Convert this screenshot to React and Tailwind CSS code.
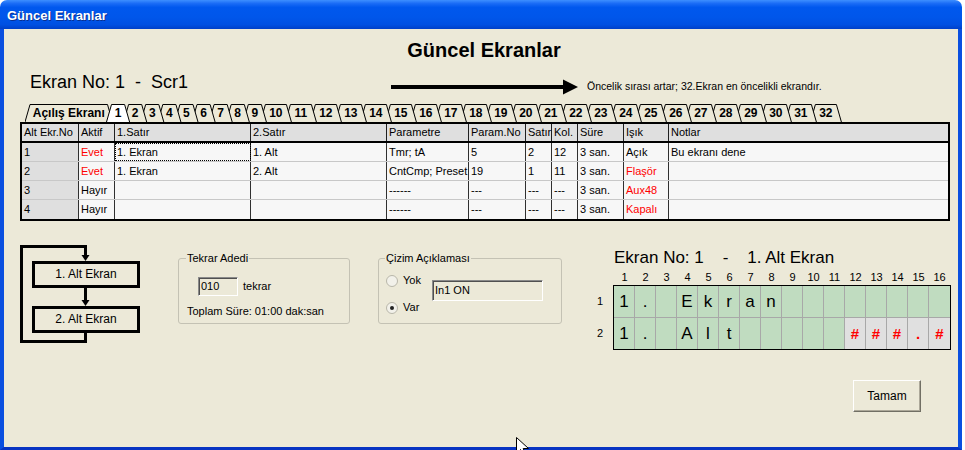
import React from 'react';

// column widths of the grid (px), incl. their own right border
const COLS = [
  { title: 'Alt Ekr.No', w: 57 },
  { title: 'Aktif', w: 36 },
  { title: '1.Satır', w: 136 },
  { title: '2.Satır', w: 136 },
  { title: 'Parametre', w: 82 },
  { title: 'Param.No', w: 57 },
  { title: 'Satır', w: 26 },
  { title: 'Kol.', w: 26 },
  { title: 'Süre', w: 46 },
  { title: 'Işık', w: 45 },
  { title: 'Notlar', w: 279 },
];

const ROWS = [
  ['1', 'Evet', '1. Ekran', '1. Alt', 'Tmr; tA', '5', '2', '12', '3 san.', 'Açık', 'Bu ekranı dene'],
  ['2', 'Evet', '1. Ekran', '2. Alt', 'CntCmp; Preset', '19', '1', '11', '3 san.', 'Flaşör', ''],
  ['3', 'Hayır', '', '', '------', '---', '---', '---', '3 san.', 'Aux48', ''],
  ['4', 'Hayır', '', '', '------', '---', '---', '---', '3 san.', 'Kapalı', ''],
];

const TABS = [{ label: 'Açılış Ekranı', w: 81.5 }];
for (let i = 1; i <= 32; i++) TABS.push({ label: String(i), w: i < 10 ? 17.1 : 25 });

const LCD = [
  ['1', '.', '', 'E', 'k', 'r', 'a', 'n', '', '', '', '', '', '', '', ''],
  ['1', '.', '', 'A', 'l', 't', '', '', '', '', '', '#', '#', '#', '.', '#'],
];

function TitleBar() {
  return (
    <div className="flex h-[29px] items-center rounded-t-[7px] bg-[linear-gradient(180deg,#3D8FFF_0%,#1A6CF6_12%,#0058EE_25%,#0056EA_60%,#0050E2_85%,#0040C8_100%)] pl-[7px] pt-[1px]">
      <span className="text-[13px] font-bold leading-[15px] text-white [text-shadow:1px_1px_0_#0A2F8F]">Güncel Ekranlar</span>
    </div>
  );
}

function TabStrip() {
  const H = 18;
  let x = 3;
  const shapes = TABS.map((t, i) => {
    const L = x;
    x += t.w;
    return { L, R: x, i };
  });
  const total = x + 4;
  const pts = (s) => `${s.L - 3},${H} ${s.L + 2},0.5 ${s.R - 2},0.5 ${s.R + 3},${H}`;
  const back = [...shapes].reverse().filter((s) => s.i !== 1);
  const sel = shapes[1];
  return (
    <div className="relative ml-[21px] mt-[1px] h-[18px]" style={{ width: total }}>
      <svg className="absolute inset-0" width={total} height={H}>
        {back.map((s) => (
          <g key={s.i}>
            <polygon points={pts(s)} fill="#ECE9D8" />
            <polyline points={pts(s)} fill="none" stroke="#000" strokeWidth="1" />
          </g>
        ))}
        <polygon points={pts(sel)} fill="#fff" />
        <polyline points={pts(sel)} fill="none" stroke="#000" strokeWidth="1" />
      </svg>
      <div className="relative flex h-full pl-[3px]">
        {TABS.map((t, i) => (
          <div key={i} className="flex items-end justify-center pb-[2px] text-[12px] font-bold leading-[13px]" style={{ width: t.w }}>
            {t.label}
          </div>
        ))}
      </div>
    </div>
  );
}

function Grid() {
  const red = (c, v) => (c === 1 && v === 'Evet') || (c === 9 && v !== 'Açık');
  return (
    <div className="ml-[16px] w-[930px] border-2 border-black text-[11px] leading-[13px]">
      <div className="flex h-[19px] border-b-2 border-black bg-[#DFDFDF]">
        {COLS.map((c, i) => (
          <div key={i} className={`flex items-center pl-[2px] ${i < COLS.length - 1 ? 'border-r border-[#202020]' : ''}`} style={{ width: c.w }}>
            {c.title}
          </div>
        ))}
      </div>
      {ROWS.map((r, ri) => (
        <div key={ri} className={`flex h-[19px] ${ri < ROWS.length - 1 ? 'border-b border-[#C8C8C8]' : 'h-[18px]'}`}>
          {r.map((v, ci) => (
            <div
              key={ci}
              className={`flex items-center pl-[2px] ${ci < COLS.length - 1 ? 'border-r border-r-[#303030]' : ''} ${ci === 0 ? 'bg-[#DFDFDF]' : 'bg-[#F7F7F7]'} ${red(ci, v) ? 'text-[#FF0000]' : ''} ${ri === 0 && ci === 2 ? 'outline outline-1 -outline-offset-1 outline-dotted outline-black' : ''}`}
              style={{ width: COLS[ci].w }}
            >
              {v}
            </div>
          ))}
        </div>
      ))}
    </div>
  );
}

function Flow() {
  return (
    <div className="relative ml-[16px] mt-[4px] h-[100px] w-[125px]">
      <svg className="absolute inset-0" width="125" height="100">
        <path d="M65.5 12 V1.5 H1.5 V96.5 H65.5 V88" fill="none" stroke="#000" strokeWidth="3" />
        <polygon points="61.5,10 69.5,10 65.5,16" fill="#000" />
        <path d="M65.5 43 V56" fill="none" stroke="#000" strokeWidth="3" />
        <polygon points="61.5,55 69.5,55 65.5,61" fill="#000" />
      </svg>
      <div className="relative ml-[12px] mt-[16px] flex h-[27px] w-[108px] items-center justify-center border-[3px] border-black text-[12px]">1. Alt Ekran</div>
      <div className="relative ml-[12px] mt-[18px] flex h-[27px] w-[108px] items-center justify-center border-[3px] border-black text-[12px]">2. Alt Ekran</div>
    </div>
  );
}

function Sunken({ className, children }) {
  return (
    <div className={`flex items-center border border-b-white border-l-[#8A8A8A] border-r-white border-t-[#8A8A8A] bg-[#ECE9D8] pl-[2px] text-[11px] shadow-[inset_1px_1px_0_#505050] ${className}`}>
      {children}
    </div>
  );
}

function Radio({ checked }) {
  return (
    <span className="flex h-[12px] w-[12px] items-center justify-center rounded-full border border-[#B9B7AA] bg-[#F2F1EA]">
      {checked && <span className="h-[4px] w-[4px] rounded-full bg-[#222]" />}
    </span>
  );
}

function Lcd() {
  return (
    <div className="ml-[28px] mt-[8px] w-[362px]">
      <div className="h-[17px] whitespace-pre pl-[24px] text-[17px] leading-[17px]">{'Ekran No: 1    -    1. Alt Ekran'}</div>
      <div className="mt-[5px] flex h-[13px] pl-[24px] text-[11px] leading-[13px]">
        {Array.from({ length: 16 }, (_, i) => (
          <div key={i} className="w-[21px] text-center">{i + 1}</div>
        ))}
      </div>
      <div className="mt-[1px] flex">
        <div className="w-[23px] pr-[10px] text-right text-[11px]">
          <div className="flex h-[32px] items-center justify-end">1</div>
          <div className="flex h-[32px] items-center justify-end">2</div>
        </div>
        <div className="border border-black">
          {LCD.map((row, ri) => (
            <div key={ri} className={`flex ${ri === 0 ? 'h-[32px] border-b border-[#A8A8A8]' : 'h-[31px]'}`}>
              {row.map((ch, ci) => {
                const gray = ri === 1 && ci >= 11;
                return (
                  <div
                    key={ci}
                    className={`flex w-[21px] items-center justify-center ${ci < 15 ? 'border-r border-[#A8A8A8]' : 'w-[20px]'} ${gray ? 'bg-[#E0E0E0] text-[15px] font-bold text-[#FF0000]' : 'bg-[#C0DCC0] text-[17px]'}`}
                  >
                    {ch}
                  </div>
                );
              })}
            </div>
          ))}
        </div>
      </div>
    </div>
  );
}

function Cursor() {
  return (
    <svg className="absolute left-[516px] top-[437px]" width="14" height="20">
      <path d="M0.5 0.5 L0.5 16.5 L4.5 12.5 L7.5 19 L10 18 L7.2 11.5 L12.5 11.5 Z" fill="#fff" stroke="#000" strokeWidth="1" />
    </svg>
  );
}

export default function App() {
  return (
    <div className="relative h-[450px] w-[965px] overflow-hidden bg-white font-['Liberation_Sans',Arial,sans-serif] text-black">
      <div className="flex h-[450px] w-[962px] flex-col">
        <TitleBar />
        <div className="flex flex-1 flex-col border-x-4 border-b-[3px] border-x-[#0A4FE0] border-b-[#0834C2] bg-[#ECE9D8]">
          <div className="mt-[11px] h-[20px] pl-[6px] text-center text-[20px] font-bold leading-[20px]">Güncel Ekranlar</div>

          <div className="mt-[11px] flex h-[32px] items-start">
            <div className="w-[387px] whitespace-pre pl-[26px] pt-[2px] text-[18px] leading-[18px]">{'Ekran No: 1  -  Scr1'}</div>
            <svg className="mt-[8px]" width="188" height="16">
              <line x1="0" y1="8" x2="174" y2="8" stroke="#000" strokeWidth="4" />
              <polygon points="172,0.5 187,8 172,15.5" fill="#000" />
            </svg>
            <div className="ml-[8px] mt-[9px] text-[10.5px] leading-[12px]">Öncelik sırası artar; 32.Ekran en öncelikli ekrandır.</div>
          </div>

          <TabStrip />
          <Grid />

          <div className="mt-[20px] flex h-[110px] items-start text-[11px] leading-[13px]">
            <Flow />

            <fieldset className="ml-[33px] mt-[11px] h-[72px] w-[172px] rounded-[3px] border border-[#C4C2B4]">
              <legend className="ml-[7px] px-[1px] text-[11px] leading-[13px]">Tekrar Adedi</legend>
              <div className="ml-[19px] mt-[12px] flex items-center">
                <Sunken className="h-[19px] w-[40px]">010</Sunken>
                <span className="ml-[5px]">tekrar</span>
              </div>
              <div className="ml-[8px] mt-[9px]">Toplam Süre: 01:00 dak:san</div>
            </fieldset>

            <fieldset className="ml-[28px] mt-[11px] h-[72px] w-[184px] rounded-[3px] border border-[#C4C2B4]">
              <legend className="ml-[6px] px-[1px] text-[11px] leading-[13px]">Çizim Açıklaması</legend>
              <div className="flex">
                <div className="ml-[7px] mt-[9px] w-[46px]">
                  <div className="flex h-[13px] items-center gap-[5px]">
                    <Radio />
                    <span>Yok</span>
                  </div>
                  <div className="mt-[14px] flex h-[13px] items-center gap-[5px]">
                    <Radio checked />
                    <span>Var</span>
                  </div>
                </div>
                <Sunken className="mt-[15px] h-[21px] w-[111px]">In1 ON</Sunken>
              </div>
            </fieldset>

            <Lcd />
          </div>

          <div className="mt-[29px] flex justify-end pr-[37px]">
            <button className="flex h-[32px] w-[68px] items-center justify-center border border-b-[#716F64] border-l-white border-r-[#716F64] border-t-white bg-[#ECE9D8] text-[12px] shadow-[inset_-1px_-1px_0_#ACA899]">
              Tamam
            </button>
          </div>
        </div>
      </div>
      <Cursor />
    </div>
  );
}
